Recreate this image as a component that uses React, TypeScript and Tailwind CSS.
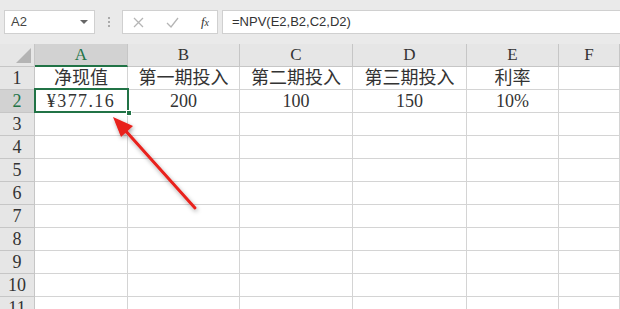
import React from 'react';

const cols = [
  { key: 'A', w: 'w-[93px]' },
  { key: 'B', w: 'w-[112px]' },
  { key: 'C', w: 'w-[113px]' },
  { key: 'D', w: 'w-[114px]' },
  { key: 'E', w: 'w-[92px]' },
  { key: 'F', w: 'w-[61px]' },
];

const data: Record<number, string[]> = {
  1: ['净现值', '第一期投入', '第二期投入', '第三期投入', '利率', ''],
  2: ['¥377.16', '200', '100', '150', '10%', ''],
};

const cellFont = { fontFamily: '"Liberation Serif", "Noto Sans CJK SC", serif' };

export default function App() {
  const rows = [1, 2, 3, 4, 5, 6, 7, 8, 9, 10, 11];

  return (
    <div className="relative w-[620px] h-[309px] overflow-hidden bg-white">
      {/* formula toolbar */}
      <div className="flex items-start h-[44px] bg-[#eaeaea] pt-[10px] pl-[4px]">
        <div className="flex items-center justify-between w-[91px] h-[24px] bg-white border border-[#d0d0d0] pl-[6px] pr-[6px]">
          <span className="text-[13px] text-[#444]" style={{ fontFamily: '"Liberation Sans", sans-serif' }}>A2</span>
          <svg width="8" height="5" viewBox="0 0 8 5">
            <path d="M0 0 L8 0 L4 4 Z" fill="#666" />
          </svg>
        </div>
        <div className="flex flex-col items-center justify-center gap-[2px] w-[27px] h-[24px]">
          <span className="w-[2px] h-[2px] bg-[#aaa]" />
          <span className="w-[2px] h-[2px] bg-[#aaa]" />
          <span className="w-[2px] h-[2px] bg-[#aaa]" />
        </div>
        <div className="flex items-center justify-between w-[96px] h-[24px] bg-white border border-[#d0d0d0] pl-[10px] pr-[8px]">
          <svg width="11" height="11" viewBox="0 0 11 11">
            <path d="M1 1 L10 10 M10 1 L1 10" stroke="#b5b5b5" strokeWidth="1.3" />
          </svg>
          <svg width="13" height="11" viewBox="0 0 13 11">
            <path d="M1 6 L5 10 L12 1" stroke="#b5b5b5" strokeWidth="1.3" fill="none" />
          </svg>
          <span className="text-[13px] italic text-[#333]" style={{ fontFamily: '"Liberation Serif", serif' }}>
            f<span className="text-[10px]">x</span>
          </span>
        </div>
        <div className="flex items-center flex-1 h-[24px] ml-[4px] bg-white border border-[#d0d0d0] border-r-0 pl-[9px]">
          <span className="text-[13px] text-[#333]" style={{ fontFamily: '"Liberation Sans", sans-serif' }}>=NPV(E2,B2,C2,D2)</span>
        </div>
      </div>

      {/* column headers */}
      <div className="flex h-[23px]" style={cellFont}>
        <div className="relative w-[35px] h-full bg-[#e6e6e6] border-r border-b border-[#c6c6c6]">
          <svg className="absolute right-[3px] bottom-[3px]" width="15" height="15" viewBox="0 0 15 15">
            <path d="M15 0 L15 15 L0 15 Z" fill="#b4b4b4" />
          </svg>
        </div>
        {cols.map((c) =>
          c.key === 'A' ? (
            <div key={c.key} className={`${c.w} h-full flex items-center justify-center bg-[#d2d2d2] border-r border-[#c6c6c6] border-b-2 border-b-[#217346] text-[17px] text-[#217346]`}>
              {c.key}
            </div>
          ) : (
            <div key={c.key} className={`${c.w} h-full flex items-center justify-center bg-[#e6e6e6] border-r border-b border-[#c6c6c6] text-[17px] text-[#333]`}>
              {c.key}
            </div>
          )
        )}
      </div>

      {/* rows */}
      {rows.map((r) => (
        <div key={r} className="flex h-[23px]" style={cellFont}>
          <div
            className={`w-[35px] h-full flex items-center justify-center border-r border-b border-[#c6c6c6] text-[18px] ${
              r === 2 ? 'bg-[#d2d2d2] text-[#217346]' : 'bg-[#e6e6e6] text-[#333]'
            }`}
          >
            {r}
          </div>
          {cols.map((c, i) => (
            <div
              key={c.key}
              className={`${c.w} h-full flex items-center justify-center border-r border-b border-[#d4d4d4] text-[18px] text-[#333] whitespace-nowrap ${
                r === 2 && i === 0 ? 'tracking-[1.4px]' : ''
              }`}
            >
              {data[r]?.[i] ?? ''}
            </div>
          ))}
        </div>
      ))}

      {/* active cell A2 */}
      <div className="absolute left-[34px] top-[88px] w-[95px] h-[25px] border-2 border-[#217346]" />
      <div className="absolute left-[126px] top-[110px] w-[6px] h-[6px] bg-[#217346] border border-white" />

      {/* red annotation arrow */}
      <svg className="absolute left-0 top-0 pointer-events-none" width="620" height="309" viewBox="0 0 620 309">
        <defs>
          <filter id="sh" x="-20%" y="-20%" width="140%" height="140%">
            <feDropShadow dx="1" dy="2" stdDeviation="2" floodColor="#000" floodOpacity="0.35" />
          </filter>
        </defs>
        <g filter="url(#sh)">
          <line x1="195" y1="208" x2="124" y2="129" stroke="#e8201c" strokeWidth="3" strokeLinecap="round" />
          <path d="M113 117 L133 126 L121 137 Z" fill="#e8201c" />
        </g>
      </svg>
    </div>
  );
}
